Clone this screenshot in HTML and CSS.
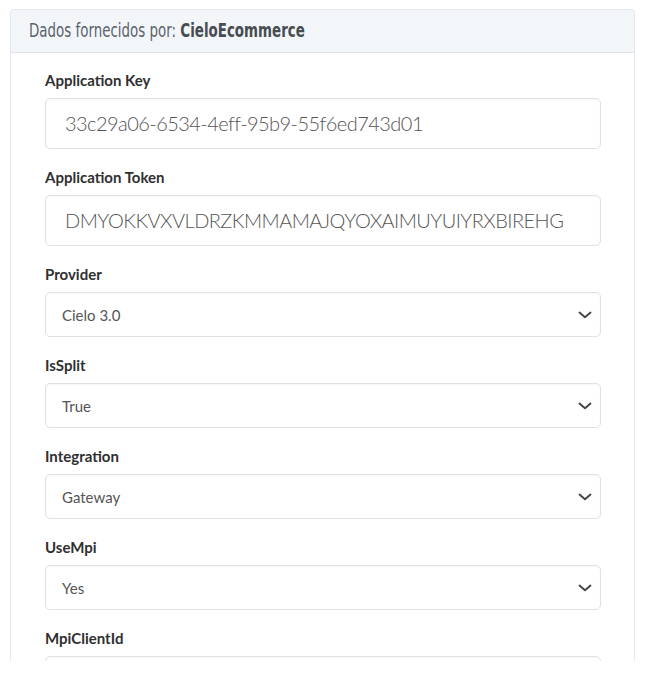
FILE: index.html
```html
<!DOCTYPE html>
<html lang="pt">
<head>
<meta charset="utf-8">
<title>Dados fornecidos por CieloEcommerce</title>
<link rel="stylesheet" href="styles.css">
</head>
<body>
<div class="frame">
  <section class="card">
    <header class="card-header">
      <span class="title"><span class="lead">Dados fornecidos por:</span> <strong class="provider">CieloEcommerce</strong></span>
    </header>
    <div class="card-body">
      <div class="group">
        <label class="label">Application Key</label>
        <div class="field field-lg">33c29a06-6534-4eff-95b9-55f6ed743d01</div>
      </div>
      <div class="group">
        <label class="label">Application Token</label>
        <div class="field field-lg">DMYOKKVXVLDRZKMMAMAJQYOXAIMUYUIYRXBIREHG</div>
      </div>
      <div class="group">
        <label class="label">Provider</label>
        <div class="field select"><span>Cielo 3.0</span><svg class="chev" width="14" height="8" viewBox="0 0 14 8"><path d="M1.5 1.5 L7 6.3 L12.5 1.5" fill="none" stroke="#444" stroke-width="1.9" stroke-linecap="round" stroke-linejoin="round"/></svg></div>
      </div>
      <div class="group">
        <label class="label">IsSplit</label>
        <div class="field select"><span>True</span><svg class="chev" width="14" height="8" viewBox="0 0 14 8"><path d="M1.5 1.5 L7 6.3 L12.5 1.5" fill="none" stroke="#444" stroke-width="1.9" stroke-linecap="round" stroke-linejoin="round"/></svg></div>
      </div>
      <div class="group">
        <label class="label">Integration</label>
        <div class="field select"><span>Gateway</span><svg class="chev" width="14" height="8" viewBox="0 0 14 8"><path d="M1.5 1.5 L7 6.3 L12.5 1.5" fill="none" stroke="#444" stroke-width="1.9" stroke-linecap="round" stroke-linejoin="round"/></svg></div>
      </div>
      <div class="group">
        <label class="label">UseMpi</label>
        <div class="field select"><span>Yes</span><svg class="chev" width="14" height="8" viewBox="0 0 14 8"><path d="M1.5 1.5 L7 6.3 L12.5 1.5" fill="none" stroke="#444" stroke-width="1.9" stroke-linecap="round" stroke-linejoin="round"/></svg></div>
      </div>
      <div class="group">
        <label class="label">MpiClientId</label>
        <div class="field field-lg"></div>
      </div>
    </div>
  </section>
</div>
</body>
</html>
```

FILE: styles.css
```css
* { box-sizing: border-box; }
html, body { margin: 0; padding: 0; background: #fff; }
body { font-family: Lato, "Noto Sans", sans-serif; color: #333; }

.frame {
  height: 661px;
  overflow: hidden;
  padding: 9px 12px 0 10px;
}

.card {
  border: 1px solid #e4e7eb;
  border-bottom: none;
  border-radius: 4px 4px 0 0;
  background: #fff;
}

.card-header {
  height: 43px;
  background: #f2f6f9;
  border-bottom: 1px solid #dfe3e7;
  border-radius: 4px 4px 0 0;
  padding: 9px 0 0 18px;
  font-family: "DejaVu Sans Condensed", "DejaVu Sans", sans-serif;
  font-size: 19.5px;
  line-height: 23px;
  color: #5b636b;
}
.card-header .title {
  display: inline-block;
  white-space: nowrap;
  transform: scaleX(0.765);
  transform-origin: left center;
}
.card-header .provider { color: #474c52; font-weight: 700; }

.card-body {
  padding: 17px 33px 0 34px;
}

.group { margin-bottom: 18px; }

.label {
  display: block;
  font-size: 15px;
  line-height: 20px;
  font-weight: 700;
  color: #2f2f2f;
  margin-bottom: 8px;
}

.field {
  border: 1px solid #e1e1e1;
  border-radius: 5px;
  background: #fff;
  box-shadow: inset 0 1px 2px rgba(0,0,0,0.04);
  color: #555;
}

.field-lg {
  height: 51px;
  padding: 0 19px;
  font-size: 20px;
  font-weight: 300;
  line-height: 49px;
  letter-spacing: -0.55px;
  white-space: nowrap;
}

.select {
  height: 45px;
  display: flex;
  align-items: center;
  justify-content: space-between;
  padding: 0 8px 0 16px;
  font-size: 15px;
}
.chev { display: block; }
```
